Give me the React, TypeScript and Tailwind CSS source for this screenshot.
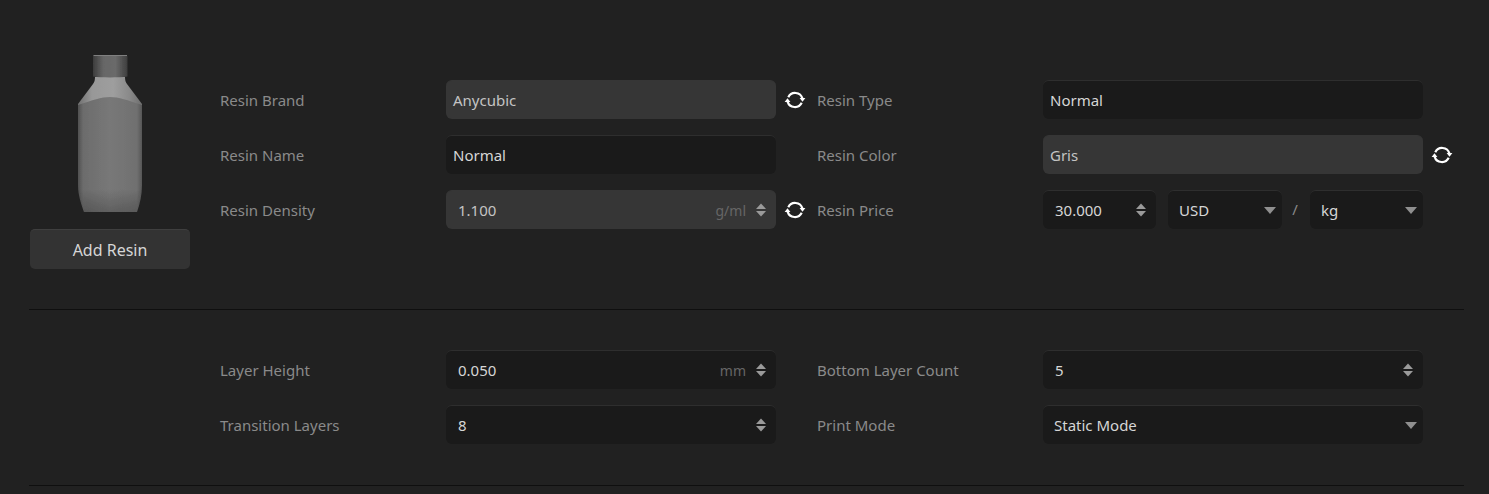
import React from "react";

const labelCls = "text-[15px] text-[#8a8a8a] leading-none pt-[2px]";

function Refresh() {
  return (
    <svg width="22" height="22" viewBox="0 0 22 22" fill="none" className="ml-[8px]">
      <path d="M4.300 8.200A7.600 7.600 0 0 1 18.400 9.400" stroke="#fff" strokeWidth="2.200" />
      <path d="M17.700 13.800A7.600 7.600 0 0 1 3.600 12.600" stroke="#fff" strokeWidth="2.200" />
      <path d="M15.600 9h5.800l-2.900 3.800z" fill="#fff" />
      <path d="M.6 13h5.800L3.500 9.200z" fill="#fff" />
    </svg>
  );
}

function Spinner() {
  return (
    <svg width="10" height="14" viewBox="0 0 10 14" className="shrink-0">
      <path d="M0 6h10L5 0.5z" fill="#9a9a9a" />
      <path d="M0 8h10l-5 5.5z" fill="#9a9a9a" />
    </svg>
  );
}

function Caret() {
  return (
    <svg width="12" height="7" viewBox="0 0 12 7" className="shrink-0">
      <path d="M0 0h12L6 7z" fill="#8f8f8f" />
    </svg>
  );
}

function Field({
  value,
  disabled,
  unit,
  spin,
  caret,
  className = "",
  pad = "pl-[7px]",
}: {
  value: string;
  disabled?: boolean;
  unit?: string;
  spin?: boolean;
  caret?: boolean;
  className?: string;
  pad?: string;
}) {
  return (
    <div
      className={`h-[39px] rounded-[6px] border-t flex items-center ${pad} ${
        disabled
          ? "bg-[#363636] border-[#363636] text-[#c4c4c4]"
          : "bg-[#1a1a1a] border-[#2e2e2e] text-[#d6d6d6]"
      } ${className}`}
    >
      <span className="text-[15px] flex-1">{value}</span>
      {unit && <span className="text-[14px] text-[#666666] mr-[10px]">{unit}</span>}
      {spin && <span className="mr-[10px] flex"><Spinner /></span>}
      {caret && <span className="mr-[6px] flex"><Caret /></span>}
    </div>
  );
}

function Bottle() {
  return (
    <svg width="66" height="160" viewBox="0 0 66 160">
      <defs>
        <linearGradient id="body" x1="0" y1="0" x2="1" y2="0">
          <stop offset="0" stopColor="#505050" />
          <stop offset="0.08" stopColor="#6c6c6c" />
          <stop offset="0.5" stopColor="#787878" />
          <stop offset="0.92" stopColor="#707070" />
          <stop offset="1" stopColor="#565656" />
        </linearGradient>
        <linearGradient id="bodyFade" x1="0" y1="0" x2="0" y2="1">
          <stop offset="0" stopColor="#000000" stopOpacity="0" />
          <stop offset="0.8" stopColor="#000000" stopOpacity="0" />
          <stop offset="1" stopColor="#000000" stopOpacity="0.2" />
        </linearGradient>
        <linearGradient id="shoulder" x1="0" y1="0" x2="1" y2="0">
          <stop offset="0" stopColor="#707070" />
          <stop offset="0.22" stopColor="#989898" />
          <stop offset="0.55" stopColor="#9e9e9e" />
          <stop offset="0.8" stopColor="#8a8a8a" />
          <stop offset="1" stopColor="#6e6e6e" />
        </linearGradient>
        <linearGradient id="cap" x1="0" y1="0" x2="1" y2="0">
          <stop offset="0" stopColor="#3c3c3c" />
          <stop offset="0.3" stopColor="#666666" />
          <stop offset="0.65" stopColor="#6a6a6a" />
          <stop offset="1" stopColor="#3e3e3e" />
        </linearGradient>
        <filter id="soft" x="-5%" y="-5%" width="110%" height="110%">
          <feGaussianBlur stdDeviation="0.7" />
        </filter>
      </defs>
      <g filter="url(#soft)">
        <path d="M1 56 L1 51 L16 31 C17.500 29 18 27 18 24 L48 24 C48 27 48.500 29 50 31 L65 51 L65 56 Z" fill="url(#shoulder)" />
        <path d="M1 52 C16 47 24 44 33 44 C42 44 50 47 65 52 L65 132 C65 142 63 150 60 159 L7 159 C4 150 1 142 1 132 Z" fill="url(#body)" />
        <path d="M1 52 C16 47 24 44 33 44 C42 44 50 47 65 52 L65 132 C65 142 63 150 60 159 L7 159 C4 150 1 142 1 132 Z" fill="url(#bodyFade)" />
        <path d="M16 4c0-1.500 1-2 2.500-2h29.500c1.500 0 2.500.5 2.500 2v19.500c-9 1.200-26 1.200-34.500 0z" fill="url(#cap)" />
        <path d="M16.500 2.500h33.500" stroke="#808080" strokeWidth="1" />
      </g>
    </svg>
  );
}

export default function App() {
  return (
    <div
      className="w-[1489px] h-[494px] bg-[#212121] overflow-hidden pl-[29px] pr-[25px]"
      style={{ fontFamily: '"Noto Sans", sans-serif' }}
    >
      <div className="flex h-[310px] border-b border-[#0f0f0f]">
        <div className="w-[160px] ml-px mr-[30px] pt-[53px] flex flex-col items-center">
          <Bottle />
          <button className="mt-[16px] w-[160px] h-[40px] rounded-[5px] bg-[#333333] border-t border-[#3f3f3f] text-[#d6d6d6] text-[16px]">
            Add Resin
          </button>
        </div>
        <div className="pt-[80px] grid grid-cols-[226px_330px_41px_226px_1fr] auto-rows-[39px] gap-y-[16px] items-center w-[1244px]">
          <span className={labelCls}>Resin Brand</span>
          <Field value="Anycubic" disabled />
          <Refresh />
          <span className={labelCls}>Resin Type</span>
          <Field value="Normal" className="w-[380px]" />

          <span className={labelCls}>Resin Name</span>
          <Field value="Normal" />
          <span />
          <span className={labelCls}>Resin Color</span>
          <div className="flex items-center">
            <Field value="Gris" disabled className="w-[380px]" />
            <Refresh />
          </div>

          <span className={labelCls}>Resin Density</span>
          <Field value="1.100" disabled unit="g/ml" spin pad="pl-[12px]" />
          <Refresh />
          <span className={labelCls}>Resin Price</span>
          <div className="flex items-center w-[380px]">
            <Field value="30.000" spin pad="pl-[12px]" className="w-[113px]" />
            <Field value="USD" caret pad="pl-[11px]" className="w-[114px] ml-[12px]" />
            <span className="w-[28px] pr-[2px] text-center text-[15px] text-[#8a8a8a]">/</span>
            <Field value="kg" caret pad="pl-[11px]" className="w-[113px]" />
          </div>
        </div>
      </div>
      <div className="h-[176px] border-b border-[#0f0f0f] pl-[191px] pt-[40px] grid grid-cols-[226px_330px_41px_226px_380px] auto-rows-[39px] gap-y-[16px] items-center">
        <span className={labelCls}>Layer Height</span>
        <Field value="0.050" unit="mm" spin pad="pl-[12px]" />
        <span />
        <span className={labelCls}>Bottom Layer Count</span>
        <Field value="5" spin pad="pl-[12px]" />

        <span className={labelCls}>Transition Layers</span>
        <Field value="8" spin pad="pl-[12px]" />
        <span />
        <span className={labelCls}>Print Mode</span>
        <Field value="Static Mode" caret pad="pl-[11px]" />
      </div>
    </div>
  );
}
